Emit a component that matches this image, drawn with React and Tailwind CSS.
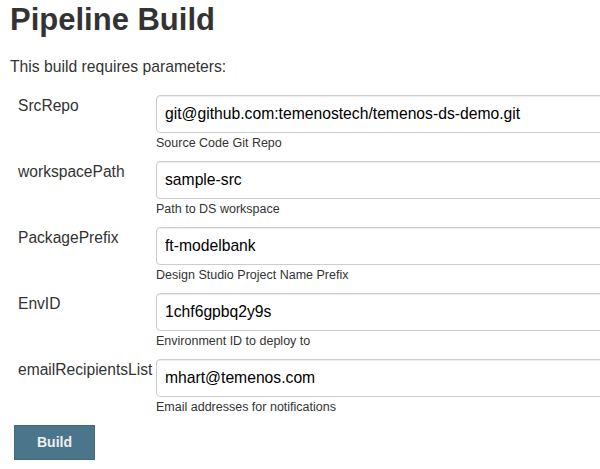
import { useState } from "react";

const params = [
  { name: "SrcRepo", value: "git@github.com:temenostech/temenos-ds-demo.git", help: "Source Code Git Repo" },
  { name: "workspacePath", value: "sample-src", help: "Path to DS workspace" },
  { name: "PackagePrefix", value: "ft-modelbank", help: "Design Studio Project Name Prefix" },
  { name: "EnvID", value: "1chf6gpbq2y9s", help: "Environment ID to deploy to" },
  { name: "emailRecipientsList", value: "mhart@temenos.com", help: "Email addresses for notifications" },
];

function ParamRow({ param, value, onChange }) {
  return (
    <div className="flex mb-[9px]">
      <label className="w-[146px] shrink-0 pl-[8px] pt-[1px] text-[15.6px] leading-[20px] whitespace-nowrap">
        {param.name}
      </label>
      <div className="shrink-0">
        <input
          className="block w-[520px] h-[38px] px-[8px] text-[15.7px] text-black border border-[#cccccc] rounded-[4px] shadow-[inset_0_1px_1px_rgba(0,0,0,0.075)] outline-none"
          type="text"
          value={value}
          onChange={(e) => onChange(param.name, e.target.value)}
        />
        <div className="mt-[1px] text-[12.5px] leading-[18px] text-[#333333]">{param.help}</div>
      </div>
    </div>
  );
}

export default function App() {
  const [values, setValues] = useState(() =>
    Object.fromEntries(params.map((p) => [p.name, p.value]))
  );

  const update = (name, val) => setValues({ ...values, [name]: val });

  return (
    <div
      className="w-[600px] h-[469px] overflow-hidden bg-white text-[#333333] pl-[10px]"
      style={{ fontFamily: '"Liberation Sans", Arial, sans-serif' }}
    >
      <h1 className="mt-[3px] text-[31px] leading-[34px] font-bold">Pipeline Build</h1>
      <p className="mt-[20px] text-[15.7px] leading-[20px]">This build requires parameters:</p>
      <div className="mt-[18px]">
        {params.map((p) => (
          <ParamRow key={p.name} param={p} value={values[p.name]} onChange={update} />
        ))}
      </div>
      <button className="ml-[4px] w-[81px] h-[35px] bg-[#4b758b] border border-[#44697d] text-[#f0f0f0] text-[14px] font-bold">
        Build
      </button>
    </div>
  );
}
